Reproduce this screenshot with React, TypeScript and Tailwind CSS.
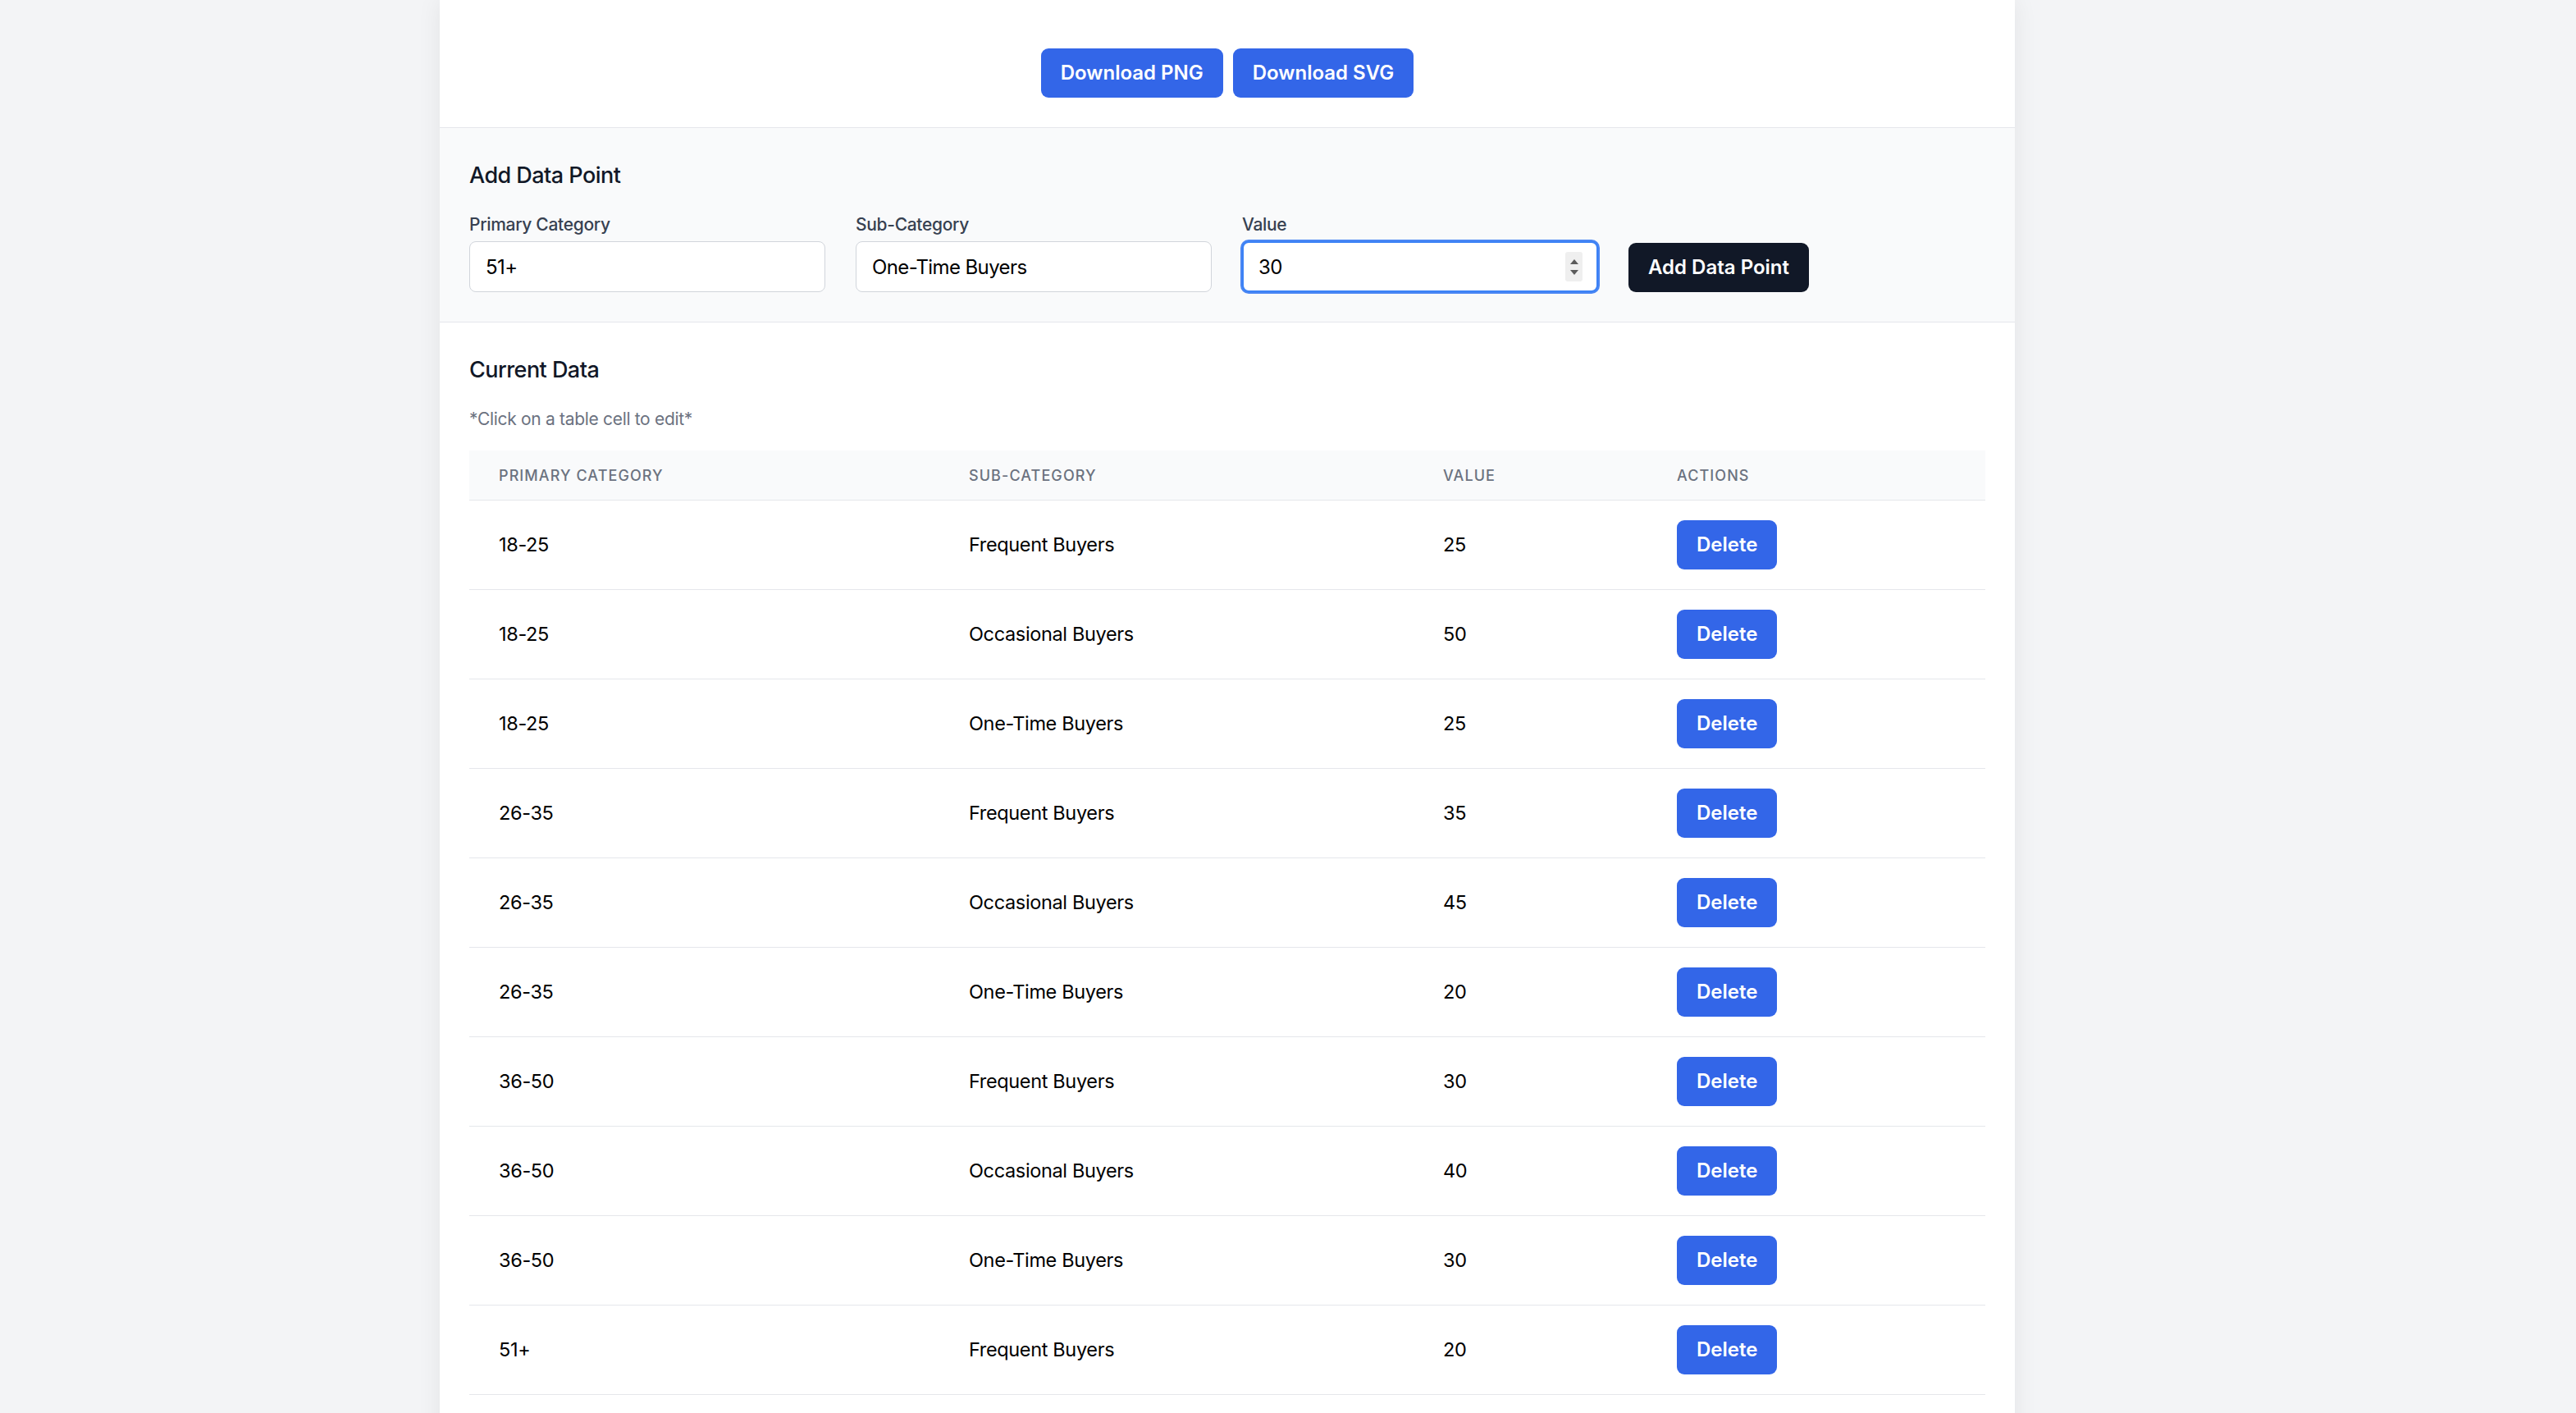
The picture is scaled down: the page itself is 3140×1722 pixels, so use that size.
import React from "react";

const rows: [string, string, string][] = [
  ["18-25", "Frequent Buyers", "25"],
  ["18-25", "Occasional Buyers", "50"],
  ["18-25", "One-Time Buyers", "25"],
  ["26-35", "Frequent Buyers", "35"],
  ["26-35", "Occasional Buyers", "45"],
  ["26-35", "One-Time Buyers", "20"],
  ["36-50", "Frequent Buyers", "30"],
  ["36-50", "Occasional Buyers", "40"],
  ["36-50", "One-Time Buyers", "30"],
  ["51+", "Frequent Buyers", "20"],
  ["51+", "Occasional Buyers", "35"],
  ["51+", "One-Time Buyers", "15"],
];

function Field({ label, value }: { label: string; value: string }) {
  return (
    <div className="flex w-[434px] flex-col">
      <label className="mb-[4px] text-[21px] leading-[32px] font-medium tracking-[-0.015em] text-[#374151]">
        {label}
      </label>
      <input
        readOnly
        value={value}
        className="h-[62px] w-[434px] rounded-[8px] border border-[#d1d5db] bg-white px-[19px] text-[24px] tracking-[-0.025em] text-black outline-none"
      />
    </div>
  );
}

function Spinner() {
  return (
    <div className="absolute right-[19px] top-1/2 flex h-[36px] w-[21px] -translate-y-1/2 flex-col items-center justify-center gap-[7px] rounded-[3px] bg-[#efefef]">
      <svg width="10" height="6" viewBox="0 0 10 6">
        <path d="M5 0 L10 6 L0 6 Z" fill="#5b5b5b" />
      </svg>
      <svg width="10" height="6" viewBox="0 0 10 6">
        <path d="M0 0 L10 0 L5 6 Z" fill="#5b5b5b" />
      </svg>
    </div>
  );
}

export default function App() {
  return (
    <div className="min-h-screen bg-[#f3f4f6] font-['Inter',sans-serif]">
      <div className="ml-[536px] w-[1920px] bg-white shadow-[0_0_28px_rgba(0,0,0,0.07)]">
        {/* Download buttons */}
        <div className="flex justify-center gap-[12px] border-b border-[#e5e7eb] pt-[59px] pb-[36px]">
          <button className="h-[60px] rounded-[9px] bg-[#3366e8] px-[24px] text-[24px] font-semibold text-white">
            Download PNG
          </button>
          <button className="h-[60px] rounded-[9px] bg-[#3366e8] px-[24px] text-[24px] font-semibold text-white">
            Download SVG
          </button>
        </div>

        {/* Add Data Point */}
        <div className="border-b border-[#e5e7eb] bg-[#f9fafb] px-[36px] pt-[38px] pb-[36px]">
          <h2 className="mb-[24px] text-[27px] leading-[40px] font-medium tracking-[-0.02em] text-[#111827]">
            Add Data Point
          </h2>
          <div className="flex items-end gap-[37px]">
            <Field label="Primary Category" value="51+" />
            <Field label="Sub-Category" value="One-Time Buyers" />
            <div className="flex w-[434px] flex-col">
              <label className="mb-[4px] text-[21px] leading-[32px] font-medium tracking-[-0.015em] text-[#374151]">
                Value
              </label>
              <div className="relative">
                <input
                  readOnly
                  value="30"
                  className="h-[62px] w-[434px] rounded-[8px] border-2 border-[#3b82f6] bg-white px-[18px] text-[24px] tracking-[-0.025em] text-black shadow-[0_0_0_2px_#4a86f3] outline-none"
                />
                <Spinner />
              </div>
            </div>
            <button className="h-[60px] rounded-[9px] bg-[#111827] px-[24px] text-[24px] font-semibold text-white">
              Add Data Point
            </button>
          </div>
        </div>

        {/* Current Data */}
        <div className="px-[36px] pt-[38px] pb-[36px]">
          <h2 className="mb-[24px] text-[27px] leading-[40px] font-medium tracking-[-0.02em] text-[#111827]">
            Current Data
          </h2>
          <p className="mb-[22px] text-[21px] leading-[32px] tracking-[-0.015em] text-[#6b7280]">
            *Click on a table cell to edit*
          </p>
          <table className="w-full table-fixed border-separate border-spacing-0">
            <colgroup>
              <col className="w-[573px]" />
              <col className="w-[578px]" />
              <col className="w-[285px]" />
              <col className="w-[412px]" />
            </colgroup>
            <thead>
              <tr>
                {["Primary Category", "Sub-Category", "Value", "Actions"].map((h) => (
                  <th
                    key={h}
                    className="h-[61px] border-b border-[#e5e7eb] bg-[#f9fafb] px-[36px] text-left text-[18px] font-medium uppercase tracking-[0.06em] text-[#6b7280]"
                  >
                    {h}
                  </th>
                ))}
              </tr>
            </thead>
            <tbody>
              {rows.map(([p, s, v], i) => (
                <tr key={i}>
                  <td className="border-b border-[#e5e7eb] px-[36px] py-[24px] text-[23.5px] tracking-[-0.015em] text-black">
                    {p}
                  </td>
                  <td className="border-b border-[#e5e7eb] px-[36px] py-[24px] text-[23.5px] tracking-[-0.015em] text-black">
                    {s}
                  </td>
                  <td className="border-b border-[#e5e7eb] px-[36px] py-[24px] text-[23.5px] tracking-[-0.015em] text-black">
                    {v}
                  </td>
                  <td className="border-b border-[#e5e7eb] px-[36px] py-[24px]">
                    <button className="block h-[60px] rounded-[9px] bg-[#3366e8] px-[24px] text-[24px] font-semibold text-white">
                      Delete
                    </button>
                  </td>
                </tr>
              ))}
            </tbody>
          </table>
        </div>
      </div>
    </div>
  );
}
